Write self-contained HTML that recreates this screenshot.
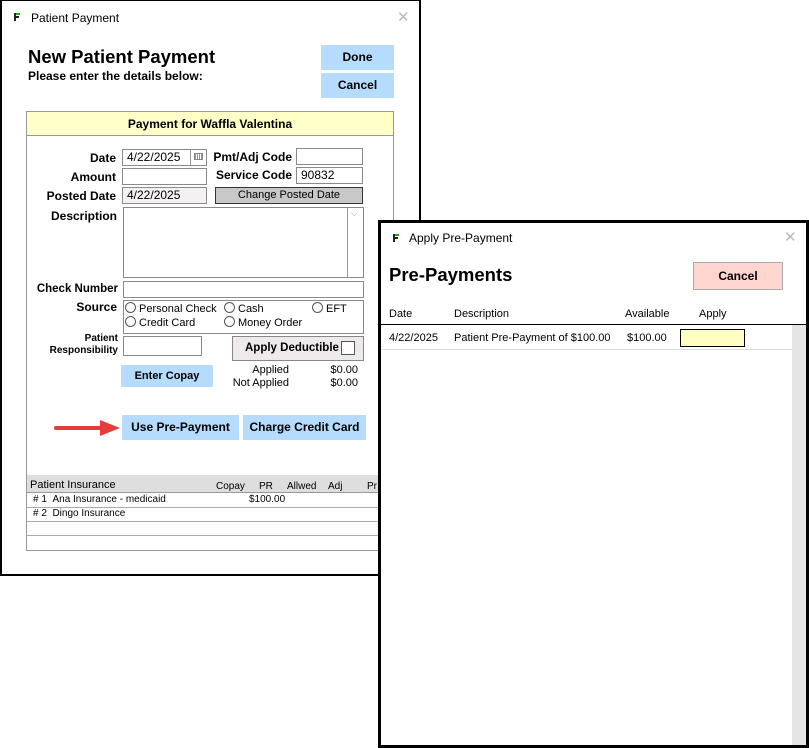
<!DOCTYPE html>
<html><head><style>
*{margin:0;padding:0;box-sizing:border-box}
body{width:809px;height:748px;background:#fff;position:relative;overflow:hidden;font-family:"Liberation Sans",Arial,sans-serif;color:#000}
.a{position:absolute}
.b{font-weight:bold}
.inp{position:absolute;border:1px solid #8a8a8a;background:#fff;font-size:12px;padding-left:4px;line-height:15px}
.btn{position:absolute;background:#b5dcfd;font-weight:bold;font-size:12px;text-align:center}
.lbl{position:absolute;font-weight:bold;font-size:12px;text-align:right}
.rad{display:inline-block;width:11px;height:11px;border:1px solid #555;border-radius:50%;vertical-align:-1px;margin-right:3px}
.s{font-size:11px}
.ico{position:absolute;width:9px;height:10px}
</style></head><body>
<!-- Window 1 -->
<div class="a" style="left:0;top:0;width:421px;height:576px;border:2px solid #000;border-top:1px solid #000;background:#fff"></div>
<svg class="ico" style="left:13px;top:12px" viewBox="0 0 9 10"><rect x="1" y="1" width="2" height="8" fill="#222"/><rect x="3" y="1" width="4" height="2" fill="#2a2"/><rect x="3" y="4" width="3" height="2" fill="#222"/></svg>
<div class="a" style="left:31px;top:11px;font-size:12px">Patient Payment</div>
<div class="a" style="left:397px;top:8px;font-size:15px;color:#bbb">✕</div>
<div class="a b" style="left:28px;top:46px;font-size:18.5px">New Patient Payment</div>
<div class="a b" style="left:28px;top:69px;font-size:12px">Please enter the details below:</div>
<div class="btn" style="left:321px;top:45px;width:73px;height:25px;line-height:25px">Done</div>
<div class="btn" style="left:321px;top:73px;width:73px;height:25px;line-height:25px">Cancel</div>

<div class="a" style="left:26px;top:111px;width:368px;height:440px;border:1px solid #999"></div>
<div class="a b" style="left:27px;top:112px;width:366px;height:24px;background:#ffffc8;border-bottom:1px solid #999;font-size:12px;text-align:center;line-height:24px">Payment for Waffla Valentina</div>

<div class="lbl" style="left:40px;top:151px;width:76px">Date</div>
<div class="inp" style="left:122px;top:149px;width:85px;height:17px">4/22/2025</div>
<div class="a" style="left:190px;top:150px;width:1px;height:15px;background:#999"></div>
<div class="a" style="left:194px;top:153px;width:9px;height:7px;border:1px solid #888;background:repeating-linear-gradient(90deg,#999 0 1px,#fff 1px 2px)"></div>
<div class="lbl" style="left:210px;top:150px;width:82px">Pmt/Adj Code</div>
<div class="inp" style="left:296px;top:148px;width:67px;height:17px"></div>
<div class="lbl" style="left:40px;top:170px;width:76px">Amount</div>
<div class="inp" style="left:122px;top:168px;width:85px;height:17px"></div>
<div class="lbl" style="left:210px;top:168px;width:82px">Service Code</div>
<div class="inp" style="left:296px;top:167px;width:67px;height:17px">90832</div>
<div class="lbl" style="left:20px;top:189px;width:96px">Posted Date</div>
<div class="inp" style="left:122px;top:187px;width:85px;height:17px;background:#f5f0f3">4/22/2025</div>
<div class="a" style="left:215px;top:187px;width:148px;height:17px;background:#c9c7c9;border:1px solid #333;font-size:11px;text-align:center;line-height:15px">Change Posted Date</div>
<div class="lbl" style="left:20px;top:209px;width:97px">Description</div>
<div class="inp" style="left:123px;top:207px;width:241px;height:71px"></div>
<div class="a" style="left:347px;top:208px;width:1px;height:69px;background:#999"></div>
<div class="a" style="left:351px;top:208px;font-size:9px;color:#999">⌵</div>
<div class="lbl" style="left:20px;top:283px;width:98px;font-size:11.5px">Check Number</div>
<div class="inp" style="left:123px;top:281px;width:241px;height:17px"></div>
<div class="lbl" style="left:40px;top:300px;width:77px">Source</div>
<div class="inp" style="left:123px;top:300px;width:241px;height:34px"></div>
<div class="a s" style="left:125px;top:302px"><span class="rad"></span>Personal Check</div>
<div class="a s" style="left:224px;top:302px"><span class="rad"></span>Cash</div>
<div class="a s" style="left:312px;top:302px"><span class="rad"></span>EFT</div>
<div class="a s" style="left:125px;top:316px"><span class="rad"></span>Credit Card</div>
<div class="a s" style="left:224px;top:316px"><span class="rad"></span>Money Order</div>
<div class="lbl" style="left:30px;top:333px;width:88px;font-size:10px;line-height:12px">Patient<br>Responsibility</div>
<div class="inp" style="left:123px;top:336px;width:79px;height:20px"></div>
<div class="a b" style="left:232px;top:336px;width:132px;height:25px;background:#eeeaec;border:1px solid #888;font-size:11.5px;line-height:23px;padding-left:12px">Apply Deductible</div>
<div class="a" style="left:341px;top:341px;width:14px;height:14px;border:1px solid #555;background:#fff"></div>
<div class="btn" style="left:121px;top:365px;width:92px;height:22px;line-height:22px;font-size:11px">Enter Copay</div>
<div class="a s" style="left:230px;top:364px;width:59px;text-align:right;line-height:13px">Applied<br>Not Applied</div>
<div class="a s" style="left:320px;top:364px;width:38px;text-align:right;line-height:13px">$0.00<br>$0.00</div>
<svg class="a" style="left:50px;top:418px" width="72" height="22"><line x1="6" y1="10" x2="52" y2="10" stroke="#e53b3b" stroke-width="4" stroke-linecap="round"/><polygon points="50,2 70,10 50,18" fill="#e53b3b"/></svg>
<div class="btn" style="left:122px;top:415px;width:117px;height:25px;line-height:25px">Use Pre-Payment</div>
<div class="btn" style="left:243px;top:415px;width:123px;height:25px;line-height:25px">Charge Credit Card</div>

<div class="a" style="left:27px;top:475px;width:360px;height:18px;background:#dedddf;border-bottom:1px solid #999"></div>
<div class="a" style="left:30px;top:479px;font-size:11px">Patient Insurance</div>
<div class="a" style="left:216px;top:481px;font-size:10px">Copay</div>
<div class="a" style="left:259px;top:481px;font-size:10px">PR</div>
<div class="a" style="left:287px;top:481px;font-size:10px">Allwed</div>
<div class="a" style="left:328px;top:481px;font-size:10px">Adj</div>
<div class="a" style="left:367px;top:481px;font-size:10px">Pr</div>
<div class="a" style="left:27px;top:507px;width:360px;height:1px;background:#aaa"></div>
<div class="a" style="left:27px;top:521px;width:360px;height:1px;background:#aaa"></div>
<div class="a" style="left:27px;top:535px;width:360px;height:1px;background:#aaa"></div>
<div class="a" style="left:33px;top:494px;font-size:10px">#&nbsp;1&nbsp;&nbsp;Ana Insurance - medicaid</div>
<div class="a" style="left:249px;top:494px;font-size:10px">$100.00</div>
<div class="a" style="left:33px;top:508px;font-size:10px">#&nbsp;2&nbsp;&nbsp;Dingo Insurance</div>

<!-- Window 2 -->
<div class="a" style="left:378px;top:220px;width:431px;height:528px;border:3px solid #000;background:#fff"></div>
<svg class="ico" style="left:392px;top:233px" viewBox="0 0 9 10"><rect x="1" y="1" width="2" height="8" fill="#222"/><rect x="3" y="1" width="4" height="2" fill="#2a2"/><rect x="3" y="4" width="3" height="2" fill="#222"/></svg>
<div class="a" style="left:409px;top:231px;font-size:12px">Apply Pre-Payment</div>
<div class="a" style="left:784px;top:228px;font-size:15px;color:#bbb">✕</div>
<div class="a b" style="left:389px;top:264px;font-size:18.5px">Pre-Payments</div>
<div class="a b" style="left:693px;top:262px;width:90px;height:28px;background:#ffd5d0;border:1px solid #aaa;font-size:12px;text-align:center;line-height:26px">Cancel</div>
<div class="a" style="left:389px;top:308px;font-size:11px">Date</div>
<div class="a" style="left:454px;top:308px;font-size:11px">Description</div>
<div class="a" style="left:625px;top:308px;font-size:11px">Available</div>
<div class="a" style="left:699px;top:308px;font-size:11px">Apply</div>
<div class="a" style="left:381px;top:324px;width:425px;height:1px;background:#000"></div>
<div class="a" style="left:792px;top:325px;width:14px;height:420px;background:#e5e5e5"></div>
<div class="a" style="left:389px;top:332px;font-size:11px">4/22/2025</div>
<div class="a" style="left:454px;top:332px;font-size:11px">Patient Pre-Payment of $100.00</div>
<div class="a" style="left:627px;top:332px;font-size:11px">$100.00</div>
<div class="a" style="left:680px;top:329px;width:65px;height:18px;background:#ffffc4;border:1px solid #000"></div>
<div class="a" style="left:381px;top:349px;width:411px;height:1px;background:#ddd"></div>
</body></html>
